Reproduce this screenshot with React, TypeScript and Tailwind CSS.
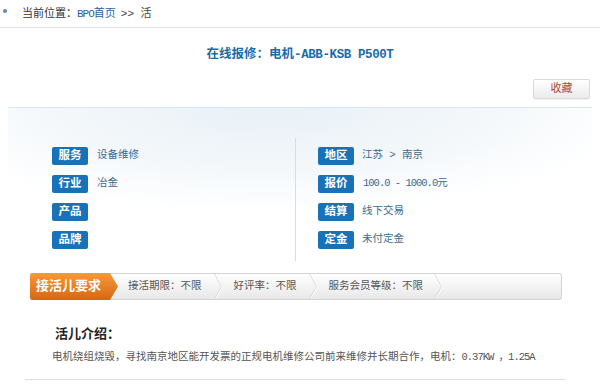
import React from 'react'

const leftRows = [
   { label: '服务', value: '设备维修' },
   { label: '行业', value: '冶金' },
   { label: '产品', value: '' },
   { label: '品牌', value: '' },
]

const Chevron = () => (
   <svg width="10" height="25" viewBox="0 0 10 25" className="shrink-0">
      <polyline points="1.5,0 8.5,12.5 1.5,25" fill="none" stroke="#ffffff" strokeWidth="1" transform="translate(1 0)" />
      <polyline points="1.5,0 8.5,12.5 1.5,25" fill="none" stroke="#d4d4d4" strokeWidth="0.8" />
   </svg>
)

const Badge = ({ text }: { text: string }) => (
   <span className="inline-flex items-center justify-center w-[36px] h-[18px] rounded-[2px] bg-[#1872b7] text-white font-bold text-[11.5px] leading-none">
      {text}
   </span>
)

const App = () => {
   return (
      <div className="w-[600px] h-[384px] overflow-hidden bg-white font-[family-name:'Liberation_Mono','Noto_Sans_CJK_SC',monospace] text-[#333]">
         {/* breadcrumb */}
         <div className="h-[28px] flex items-center border-b border-[#e2e2e2]">
            <span className="ml-[3px] mb-[5px] w-[4px] h-[4px] rounded-full bg-[#5a8ab6]"></span>
            <span className="ml-[15px] text-[11px] leading-[14px]">当前位置：</span>
            <span className="text-[11px] leading-[14px] text-[#2b5f9e] tracking-[-1px]">BPO</span>
            <span className="text-[11px] leading-[14px] text-[#2b5f9e]">首页</span>
            <span className="ml-[5px] text-[11px] leading-[14px] text-[#444]">&gt;&gt; 活</span>
         </div>

         {/* title */}
         <div className="mt-[19px] text-center text-[12.5px] leading-[16px] font-bold text-[#1b6ba8]">
            在线报修：电机<span className="tracking-[-0.4px]">-ABB-KSB P500T</span>
         </div>

         {/* fav button */}
         <div className="mt-[16px] flex justify-end pr-[10px]">
            <button className="w-[57px] h-[20px] rounded-[2px] border border-[#dadada] bg-linear-to-b from-white to-[#ebebeb] text-[11px] text-[#b0452a] shadow-[0_1px_1px_rgba(0,0,0,0.06)]">
               收藏
            </button>
         </div>

         {/* info panel */}
         <div className="mt-[8px] mx-[8px] border-t border-[#dbe5ec] bg-[radial-gradient(ellipse_70%_75%_at_45%_0%,#e8f1f7_0%,#f3f7fa_50%,#ffffff_90%)]">
            <div className="flex pt-[30px]">
               <div className="w-[287px] pl-[44px] pt-[9px] flex flex-col gap-[10px]">
                  {leftRows.map((r) => (
                     <div key={r.label} className="flex items-center h-[18px]">
                        <Badge text={r.label} />
                        <span className="ml-[9px] text-[10.5px] text-[#3b6a92]">{r.value}</span>
                     </div>
                  ))}
               </div>
               <div className="border-l border-[#dcdcdc] pl-[22px] pt-[9px] pb-[12px] flex flex-col gap-[10px]">
                  <div className="flex items-center h-[18px]">
                     <Badge text="地区" />
                     <span className="ml-[8px] text-[10.5px] text-[#3b6a92]">江苏 &gt; 南京</span>
                  </div>
                  <div className="flex items-center h-[18px]">
                     <Badge text="报价" />
                     <span className="ml-[9px] text-[10.5px] text-[#3b6a92]">
                        <span className="tracking-[-1px]">100.0 - 1000.0</span>元
                     </span>
                  </div>
                  <div className="flex items-center h-[18px]">
                     <Badge text="结算" />
                     <span className="ml-[8px] text-[10.5px] text-[#3b6a92]">线下交易</span>
                  </div>
                  <div className="flex items-center h-[18px]">
                     <Badge text="定金" />
                     <span className="ml-[8px] text-[10.5px] text-[#3b6a92]">未付定金</span>
                  </div>
               </div>
            </div>
         </div>

         {/* requirement bar */}
         <div className="mt-[12px] ml-[30px] mr-[38px] h-[27px] flex items-center rounded-r-[3px] border-y border-r border-[#d3d3d3] bg-linear-to-b from-white to-[#e8e8e8]">
            <div className="-my-px h-[27px] w-[88px] pl-[6px] flex items-center rounded-l-[3px] bg-linear-to-b from-[#f49a3a] to-[#d8660d] text-white font-bold text-[13px] [clip-path:polygon(0_0,calc(100%-8px)_0,100%_50%,calc(100%-8px)_100%,0_100%)]">
               接活儿要求
            </div>
            <span className="ml-[10px] text-[10.5px] text-[#555]">接活期限：不限</span>
            <span className="mx-[11px]"><Chevron /></span>
            <span className="text-[10.5px] text-[#555]">好评率：不限</span>
            <span className="mx-[11px]"><Chevron /></span>
            <span className="text-[10.5px] text-[#555]">服务会员等级：不限</span>
            <span className="ml-[10px]"><Chevron /></span>
         </div>

         {/* intro */}
         <div className="mt-[27px] pl-[55px] text-[13px] leading-[16px] font-bold text-[#222]">活儿介绍：</div>
         <div className="mt-[7px] pl-[52px] text-[10.5px] leading-[14px] text-[#555]">
            电机绕组烧毁，寻找南京地区能开发票的正规电机维修公司前来维修并长期合作，电机：<span className="tracking-[-1px]">0.37KW ，1.25A</span>
         </div>
         <div className="mt-[15px] ml-[25px] mr-[35px] border-t border-[#dddddd]"></div>
      </div>
   )
}

export default App
